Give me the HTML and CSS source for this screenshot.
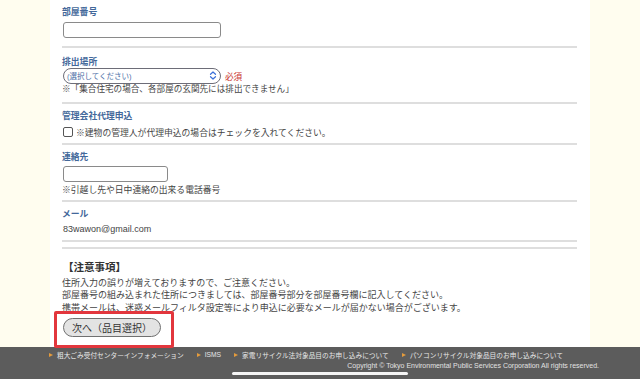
FILE: index.html
```html
<!DOCTYPE html>
<html lang="ja">
<head>
<meta charset="utf-8">
<title>申込フォーム</title>
<link rel="stylesheet" href="styles.css">
</head>
<body>
<div class="page">
  <main class="panel">
    <section class="field f1">
      <div class="label">部屋番号</div>
      <input class="text-input w-long" type="text">
    </section>
    <section class="field f2">
      <div class="label">排出場所</div>
      <div class="select-row">
        <div class="select">
          <span class="select-text">(選択してください)</span>
          <svg class="select-arrow" width="8" height="9" viewBox="0 0 8 9"><path d="M1.5 3.3 L4 1 L6.5 3.3 M1.5 5.7 L4 8 L6.5 5.7" fill="none" stroke="#3a6fd8" stroke-width="1.2" stroke-linecap="round" stroke-linejoin="round"/></svg>
        </div>
        <span class="req">必須</span>
      </div>
      <div class="note">※「集合住宅の場合、各部屋の玄関先には排出できません」</div>
    </section>
    <section class="field f3">
      <div class="label">管理会社代理申込</div>
      <label class="check-row"><span class="checkbox"></span><span>※建物の管理人が代理申込の場合はチェックを入れてください。</span></label>
    </section>
    <section class="field f4">
      <div class="label">連絡先</div>
      <input class="text-input w-short" type="text">
      <div class="note note-tel">※引越し先や日中連絡の出来る電話番号</div>
    </section>
    <section class="field f5">
      <div class="label">メール</div>
      <div class="email">83wawon@gmail.com</div>
    </section>
    <div class="sep"></div>
    <section class="notice">
      <h2 class="notice-title">【注意事項】</h2>
      <p class="notice-line">住所入力の誤りが増えておりますので、ご注意ください。</p>
      <p class="notice-line">部屋番号の組み込まれた住所につきましては、部屋番号部分を部屋番号欄に記入してください。</p>
      <p class="notice-line">携帯メールは、迷惑メールフィルタ設定等により申込に必要なメールが届かない場合がございます。</p>
    </section>
    <div class="btn-wrap">
      <button class="next-btn" type="button">次へ（品目選択）</button>
    </div>
  </main>
  <footer class="footer">
    <nav class="footer-links">
      <a class="flink"><span class="arrow"></span>粗大ごみ受付センターインフォメーション</a>
      <a class="flink"><span class="arrow"></span>ISMS</a>
      <a class="flink"><span class="arrow"></span>家電リサイクル法対象品目のお申し込みについて</a>
      <a class="flink"><span class="arrow"></span>パソコンリサイクル対象品目のお申し込みについて</a>
    </nav>
    <div class="copyright">Copyright © Tokyo Environmental Public Services Corporation All rights reserved.</div>
  </footer>
  <div class="home-bar"></div>
</div>
</body>
</html>
```
FILE: styles.css
```css
* { box-sizing: border-box; }
html, body {
  margin: 0;
  padding: 0;
  background: #fffdef;
  font-family: "Liberation Sans", "Noto Sans CJK JP", sans-serif;
  color: #3a3a3a;
}
.page {
  width: 640px;
  height: 379px;
  position: relative;
  overflow: hidden;
}
.panel {
  margin-left: 50px;
  width: 540px;
  background: #fff;
  padding: 0 13px 0 12px;
}
.field {
  border-bottom: 2px solid #dedede;
}
.label {
  font-size: 8.8px;
  line-height: 14px;
  font-weight: bold;
  color: #43689a;
}
.text-input {
  display: block;
  height: 16px;
  border: 1px solid #8a8a8a;
  border-radius: 3px;
  background: #fff;
  margin-left: 1px;
  padding: 0;
}
.w-long { width: 158px; }
.w-short { width: 105px; height: 15.7px; }
.f1 { padding: 5px 0 8.2px; }
.f1 .text-input { margin-top: 2.5px; }
.f2 { padding: 7.3px 0 7.3px; }
.select-row {
  display: flex;
  align-items: center;
  margin-top: -1px;
  margin-left: 1px;
}
.select {
  width: 158px;
  height: 16px;
  border: 1px solid #6d6d78;
  border-radius: 8px;
  display: flex;
  align-items: center;
  justify-content: space-between;
  padding: 0 3px 0 3px;
}
.select-text {
  font-size: 7.5px;
  color: #4c6ea6;
}
.select-arrow { display: block; }
.req {
  margin-left: 4px;
  font-size: 8.6px;
  color: #c8332e;
}
.note {
  font-size: 8.6px;
  line-height: 11px;
  color: #444;
}
.f3 { padding: 4.4px 0 3.5px; }
.check-row {
  display: flex;
  align-items: center;
  margin-top: 2.8px;
  height: 14px;
  font-size: 8.8px;
  color: #444;
  margin-left: 1px;
}
.checkbox {
  width: 10px;
  height: 10px;
  border: 1px solid #555;
  border-radius: 2px;
  margin-right: 3px;
  background: #fff;
}
.f4 { padding: 5.3px 0 3.9px; }
.f4 .text-input { margin-top: 1.7px; }
.note-tel { margin-top: 3.1px; font-size: 8.8px; }
.f5 { padding: 5.6px 0 3.7px; }
.email {
  margin-top: 1px;
  font-size: 9px;
  line-height: 14px;
  color: #444;
  margin-left: 1px;
}
.sep {
  margin-top: 5px;
  height: 2px;
  background: #dedede;
}
.notice { padding-top: 9.7px; }
.notice-title {
  margin: 0;
  font-size: 10.5px;
  line-height: 16px;
  font-weight: bold;
  color: #333;
  margin-left: 1px;
}
.notice-line {
  margin: 0;
  font-size: 9px;
  line-height: 12.5px;
  color: #444;
  white-space: nowrap;
}
.notice-title + .notice-line { margin-top: 2.3px; }
.btn-wrap {
  position: relative;
  padding: 3.5px 0 10px;
}
.btn-wrap::after {
  content: "";
  position: absolute;
  left: -8px;
  top: -3.5px;
  width: 114px;
  height: 31px;
  border: 3.5px solid #e2363d;
  border-radius: 2px;
}
.next-btn {
  display: block;
  margin: 0 0 0 1px;
  width: 98px;
  height: 19px;
  border: 1px solid #707070;
  border-radius: 10px;
  background: #e3e3e3;
  font-family: "Liberation Sans", "Noto Sans CJK JP", sans-serif;
  font-size: 10px;
  color: #333;
  padding: 0;
}
.footer {
  height: 32px;
  background: #5c5c5c;
  padding-top: 3px;
}
.footer-links {
  display: flex;
  gap: 13px;
  padding-left: 49px;
  height: 10px;
  align-items: center;
}
.flink {
  display: flex;
  align-items: center;
  font-size: 6.7px;
  color: #e6e6e6;
  white-space: nowrap;
}
.arrow {
  width: 0;
  height: 0;
  border-left: 4px solid #e49b3c;
  border-top: 2.2px solid transparent;
  border-bottom: 2.2px solid transparent;
  margin-right: 4px;
}
.copyright {
  height: 10px;
  line-height: 10px;
  font-size: 7px;
  color: #e2e2e2;
  text-align: right;
  padding-right: 41px;
  margin-top: 1px;
  white-space: nowrap;
}
.home-bar {
  position: absolute;
  left: 232px;
  top: 372px;
  width: 176px;
  height: 3px;
  border-radius: 2px;
  background: #f4f4f4;
}
```
